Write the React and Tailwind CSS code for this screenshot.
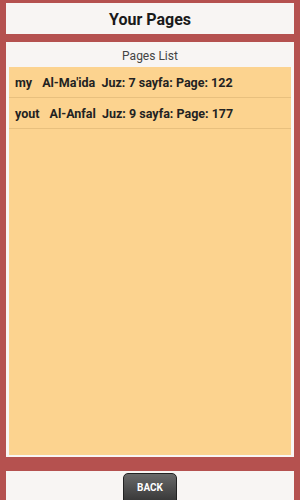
export default function App() {
  const pages = [
    { name: "my", sura: "Al-Ma'ida", juz: 7, page: 122 },
    { name: "yout", sura: "Al-Anfal", juz: 9, page: 177 },
  ];

  return (
    <div
      className="w-[300px] h-[500px] bg-[#b5514f] flex flex-col px-[6px] pt-[3px] overflow-hidden"
      style={{ fontFamily: "Roboto, 'Liberation Sans', sans-serif" }}
    >
      {/* header */}
      <div className="h-[31px] bg-[#f8f5f3] flex items-center justify-center pt-[3px] shrink-0">
        <h1 className="text-[16px] font-bold text-[#1a1a1a]">Your Pages</h1>
      </div>

      {/* list panel */}
      <div className="mt-[8px] h-[415px] bg-[#f8f5f3] flex flex-col px-[3px] pb-[2px] shrink-0">
        <div className="h-[25px] flex items-end justify-center pb-[2px] text-[12px] text-[#444]">
          Pages List
        </div>
        <div className="flex-1 bg-[#fcd38f]">
          {pages.map((p) => (
            <div
              key={p.name}
              className="h-[31px] flex items-center gap-[10px] px-[6px] pt-[2px] border-b border-[#e8c07e] text-[12.5px] font-bold text-[#222]"
            >
              <span>{p.name}</span>
              <span>
                {p.sura}&nbsp; Juz: {p.juz} sayfa: Page: {p.page}
              </span>
            </div>
          ))}
        </div>
      </div>

      {/* footer */}
      <div className="mt-[14px] flex-1 bg-[#f8f5f3] flex justify-center pt-[2px]">
        <button className="relative w-[54px] h-[32px] rounded-[5px] bg-gradient-to-b from-[#6a6a6a] to-[#333] border border-[#222] text-white text-[10px] font-bold shadow-[0_2px_0_#1e6f9a] pb-[4px]">
          BACK
        </button>
      </div>
    </div>
  );
}
